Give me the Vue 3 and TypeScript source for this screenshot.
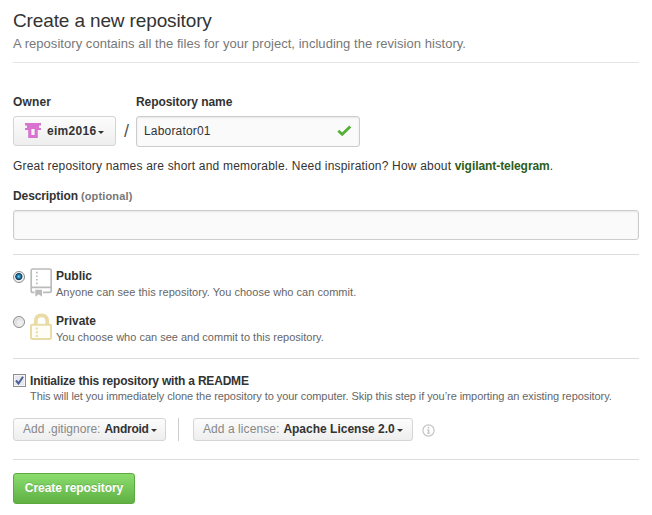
<script setup lang="ts">
import { ref } from 'vue'

const visibility = ref<'public' | 'private'>('public')
const initReadme = ref(true)
const repoName = ref('Laborator01')
const description = ref('')
</script>

<template>
  <form class="page" @submit.prevent>
    <header class="head">
      <h1>Create a new repository</h1>
      <p class="lead">A repository contains all the files for your project, including the revision history.</p>
    </header>

    <div class="names">
      <div class="field">
        <label class="label t-label">Owner</label>
        <button type="button" class="btn owner">
          <svg class="avatar" width="16" height="15" viewBox="0 0 5 5" preserveAspectRatio="none">
            <path fill="#d973d0" d="M0 0h5v.8h-.6v.9H5v.6h-1V5H1V2.300H0v-.6h.6V.8H0zM2 2v2h1V2z" fill-rule="evenodd" />
          </svg>
          <b class="t-owner">eim2016</b><i class="caret"></i>
        </button>
      </div>
      <span class="slash">/</span>
      <div class="field">
        <label class="label t-rn">Repository name</label>
        <div class="input repo">
          <input v-model="repoName" class="t-lab" type="text" />
          <svg width="16" height="12" viewBox="0 0 16 12"><path d="M2.300 5.800 6.200 9.300 14.300 1.600" fill="none" stroke="#55b035" stroke-width="2.800" /></svg>
        </div>
      </div>
    </div>

    <p class="hint"><span class="t-hint">Great repository names are short and memorable. Need inspiration? How about </span><b class="t-vt">vigilant-telegram</b>.</p>

    <label class="label desc"><span class="t-desc">Description</span><span class="optional">(optional)</span></label>
    <input v-model="description" class="input wide" type="text" />

    <section class="visibility">
      <label class="choice">
        <span class="radio" :class="{ on: visibility === 'public' }" @click="visibility = 'public'"></span>
        <svg class="icon" width="22" height="29" viewBox="0 0 22 29">
          <path d="M2.500 1h17.200Q21.200 1 21.200 2.500v20.500q0 1.400-1.500 1.400H13M4.500 24.400H2.500q-1.300 0-1.300-1.400V2.500Q1.200 1 2.500 1M1 19.300h20" fill="none" stroke="#bbb" stroke-width="1.700" />
          <path d="M5.300 21.800h6.700v7l-3.300-2.500-3.400 2.500zM6 3.800h1.700v1.600H6zM6 7.400h1.700v1.600H6zM6 11h1.700v1.600H6zM6 14.600h1.700v1.600H6z" fill="#bbb" />
        </svg>
        <span class="copy"><b>Public</b><small class="t-any">Anyone can see this repository. You choose who can commit.</small></span>
      </label>
      <label class="choice">
        <span class="radio" :class="{ on: visibility === 'private' }" @click="visibility = 'private'"></span>
        <svg class="icon" width="22" height="29" viewBox="0 0 22 29">
          <path d="M5.800 12V8.300Q5.800 2.400 11.500 2.400t5.700 5.900V12" fill="none" stroke="#e9dba5" stroke-width="3.700" />
          <path d="M2.300 11.800h17.500q1.300 0 1.300 1.300V24.700q0 1.300-1.300 1.300H2.300q-1.300 0-1.300-1.300V13.100q0-1.300 1.300-1.300z" fill="#fffdf5" stroke="#e9dba5" stroke-width="2" />
          <path d="M5.800 14.500h2v2h-2zM5.800 18.300h2v2h-2zM5.800 22h2v2h-2z" fill="#e9dba5" />
        </svg>
        <span class="copy"><b>Private</b><small>You choose who can see and commit to this repository.</small></span>
      </label>
    </section>

    <section class="setup">
      <label class="init">
        <span class="check" @click="initReadme = !initReadme">
          <svg v-if="initReadme" width="9" height="9" viewBox="0 0 9 9"><path d="M1 4.500 3.500 7.500 8 .8" fill="none" stroke="#4a5f97" stroke-width="2" /></svg>
        </span>
        <span class="copy"><b class="t-init">Initialize this repository with a README</b><small class="t-this">This will let you immediately clone the repository to your computer. Skip this step if you’re importing an existing repository.</small></span>
      </label>
      <div class="options">
        <button type="button" class="btn small ignore"><span>Add .gitignore:</span><b class="t-and">Android</b><i class="caret"></i></button>
        <span class="divider"></span>
        <button type="button" class="btn small license"><span class="t-al">Add a license:</span><b>Apache License 2.0</b><i class="caret"></i></button>
        <svg class="info" width="13" height="13" viewBox="0 0 13 13">
          <circle cx="6.500" cy="6.500" r="5.600" fill="none" stroke="#c4c4c4" stroke-width="1.200" />
          <path d="M5.700 2.800h1.600v1.600H5.700zM5 5.500h2.300v3.300h.9v1H5v-1h.8V6.500H5z" fill="#c4c4c4" />
        </svg>
      </div>
    </section>

    <button class="submit" type="submit">Create repository</button>
  </form>
</template>

<style>
body {
  background: #fff;
}
</style>

<style scoped>
* {
  box-sizing: border-box;
}
.page {
  width: 652px;
  height: 515px;
  padding: 10px 13px 0;
  font: 12px/18px "Liberation Sans", Arial, sans-serif;
  color: #333;
  white-space: nowrap;
  overflow: hidden;
}
.page button,
.page input {
  font: inherit;
  color: inherit;
}
h1,
p {
  margin: 0;
}
.head {
  height: 53px;
  border-bottom: 1px solid #e5e5e5;
}
h1 {
  font-size: 19px;
  line-height: 22px;
  font-weight: normal;
  letter-spacing: -0.13px;
}
.lead {
  font-size: 13px;
  line-height: 18px;
  padding-top: 3px;
  color: #777;
  letter-spacing: 0.045px;
}
.names {
  display: flex;
  padding-top: 30px;
  height: 84px;
}
.label {
  display: block;
  font-weight: bold;
  line-height: 18px;
  height: 18px;
}
.t-label {
  letter-spacing: 0.15px;
}
.t-rn {
  letter-spacing: -0.07px;
}
.t-owner {
  letter-spacing: 0.28px;
}
.page .t-lab {
  letter-spacing: 0.18px;
}
.t-hint {
  letter-spacing: 0.195px;
}
.t-vt {
  letter-spacing: -0.06px;
}
.t-desc {
  letter-spacing: -0.1px;
}
.t-any {
  letter-spacing: 0.035px;
}
.t-init {
  letter-spacing: -0.2px;
}
.t-this {
  letter-spacing: -0.073px;
}
.t-and {
  letter-spacing: -0.25px;
}
.t-al {
  letter-spacing: 0.07px;
}
.btn {
  display: flex;
  align-items: center;
  border: 1px solid #d5d5d5;
  border-radius: 3px;
  background: linear-gradient(#fcfcfc, #eee);
  padding: 0;
}
.owner {
  width: 103px;
  height: 30px;
  margin-top: 5px;
  padding-left: 11px;
}
.avatar {
  margin: 0 6px 1px 0;
}
.caret {
  border: 3px solid transparent;
  border-top-color: #333;
  border-bottom: 0;
  margin: 3px 0 0 2px;
}
.slash {
  width: 20px;
  padding: 23px 0 0 1px;
  text-align: center;
  font-size: 18px;
  line-height: 30px;
  color: #555;
}
.input {
  border: 1px solid #ccc;
  border-radius: 3px;
  background: #fafafa;
  box-shadow: inset 0 1px 2px rgba(0, 0, 0, 0.075);
  outline: none;
}
.repo {
  display: flex;
  align-items: center;
  width: 224px;
  height: 31px;
  margin-top: 5px;
  padding: 0 7px 1px;
}
.repo input {
  border: 0;
  padding: 0;
  width: 192px;
  background: none;
  outline: none;
}
.hint {
  padding-top: 10px;
  height: 28px;
}
.hint b {
  color: #2c5d20;
}
.desc {
  margin-top: 12px;
}
.optional {
  margin-left: 3px;
  font-size: 11px;
  color: #777;
  letter-spacing: 0.15px;
}
.wide {
  display: block;
  width: 626px;
  height: 30px;
  margin-top: 5px;
}
.visibility {
  margin-top: 14px;
  height: 105px;
  border-top: 1px solid #ddd;
  border-bottom: 1px solid #ddd;
  padding-top: 12px;
}
.choice {
  display: flex;
  height: 45px;
}
.radio {
  width: 12px;
  height: 12px;
  margin-top: 4px;
  border: 1px solid #8b8b8b;
  border-radius: 50%;
  background: radial-gradient(circle at 60% 60%, #eee 25%, #bbb);
  box-shadow: inset 0 0 0 1px #f4f4f4;
}
.radio.on {
  background: radial-gradient(circle at 48% 45%, #7ad8fa 0, #2383b5 22%, #0f3858 42%, #eee 54%);
}
.icon {
  margin: 1px 4px 0 5px;
}
.copy {
  display: block;
}
.copy b,
.copy small {
  display: block;
}
.copy b {
  line-height: 18px;
}
.copy small {
  font-size: 11px;
  line-height: 15px;
  color: #666;
}
.setup {
  height: 101px;
  border-bottom: 1px solid #ddd;
  padding-top: 13px;
}
.init {
  display: flex;
  height: 46px;
}
.init small {
  margin-top: -1px;
}
.check {
  display: flex;
  align-items: center;
  justify-content: center;
  width: 13px;
  height: 13px;
  margin: 2px 4px 0 0;
  border: 1px solid #8e8f8f;
  background: #e6e8ee;
  box-shadow: inset 0 0 0 1px #f4f4f4;
}
.options {
  display: flex;
}
.small {
  height: 23px;
  padding: 0 0 1px 9px;
}
.small span {
  color: #888;
  margin-right: 4px;
}
.ignore {
  width: 153px;
}
.divider {
  width: 1px;
  height: 23px;
  margin: 0 14px 0 12px;
  background: #ccc;
}
.license {
  width: 220px;
}
.info {
  margin: 6px 0 0 9px;
}
.page .submit {
  display: block;
  width: 122px;
  height: 31px;
  margin-top: 13px;
  padding: 0 0 2px;
  border: 1px solid #5ca941;
  border-radius: 3px;
  background: linear-gradient(#8add6d, #60b044);
  color: #fff;
  font-weight: bold;
  letter-spacing: -0.06px;
  text-shadow: 0 -1px 0 rgba(0, 0, 0, 0.15);
}
</style>
